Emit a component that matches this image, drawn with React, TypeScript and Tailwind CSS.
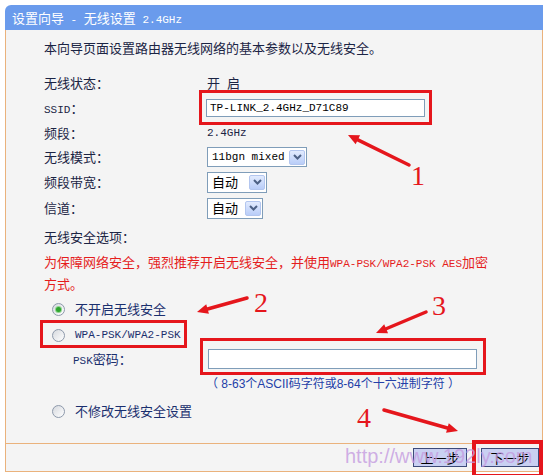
import React from 'react';

const mono = "font-['Liberation_Mono',monospace] text-[11px] whitespace-pre";
const red = '#e5161c';

function Latin({ children }: { children: React.ReactNode }) {
  return <span className={mono}>{children}</span>;
}

function Chevron() {
  return (
    <span className="flex items-center justify-center w-[16px] h-[15px] mr-[1px] rounded-[2px] border border-[#b3c6ef] bg-gradient-to-b from-[#e2ebfe] to-[#b9cdf8]">
      <svg width="9" height="6" viewBox="0 0 9 6">
        <path d="M1 1 L4.5 4.5 L8 1" fill="none" stroke="#4d6185" strokeWidth="2" />
      </svg>
    </span>
  );
}

function Radio({ checked = false }: { checked?: boolean }) {
  return (
    <span className="flex items-center justify-center w-[13px] h-[13px] rounded-full border border-[#8d99ab] bg-gradient-to-br from-[#d6d9de] to-white">
      {checked && <span className="w-[5px] h-[5px] rounded-full bg-[#2ea52e] ring-1 ring-[#8fd48f]" />}
    </span>
  );
}

function Row({ label, h, children }: { label: React.ReactNode; h: string; children?: React.ReactNode }) {
  return (
    <div className={`flex items-center ${h}`}>
      <span className="w-[163px]">{label}</span>
      {children}
    </div>
  );
}

function Arrow({ x1, y1, x2, y2 }: { x1: number; y1: number; x2: number; y2: number }) {
  const a = Math.atan2(y2 - y1, x2 - x1);
  const len = 11;
  const w = 5;
  const bx = x2 - len * Math.cos(a);
  const by = y2 - len * Math.sin(a);
  const px = -Math.sin(a) * w;
  const py = Math.cos(a) * w;
  return (
    <g>
      <line x1={x1} y1={y1} x2={bx} y2={by} stroke={red} strokeWidth="3.5" strokeLinecap="round" />
      <polygon points={`${x2},${y2} ${bx + px},${by + py} ${bx - px},${by - py}`} fill={red} />
    </g>
  );
}

export default function App() {
  return (
    <div className="relative w-[548px] h-[475px] overflow-hidden bg-white pl-[5px] pt-[5px] font-['Noto_Sans_CJK_SC',sans-serif] text-[13px] text-[#1b2444]">
      <div className="w-[538px]">
        <div className="h-[25px] pl-[7px] rounded-tl-[6px] bg-[#6a9bec] text-white leading-[25px] whitespace-pre">
          设置向导<Latin> - </Latin>无线设置<Latin> 2.4GHz</Latin>
        </div>

        <div className="h-[413px] flex flex-col pl-[38px] pt-[8px] border-x border-[#eab27c] bg-[#f4f4f4]">
          <div className="h-[20px] leading-[20px]">本向导页面设置路由器无线网络的基本参数以及无线安全。</div>

          <div className="mt-[13px] flex flex-col">
            <Row label="无线状态：" h="h-[24px]">
              <span>开</span>
              <span className="ml-[7px]">启</span>
            </Row>
            <Row label={<><Latin>SSID</Latin>：</>} h="h-[26px]">
              <div className="w-[219px] h-[18px] ml-[-1px] flex items-center pl-[3px] bg-white border border-[#7f9db9] text-black">
                <Latin>TP-LINK_2.4GHz_D71C89</Latin>
              </div>
            </Row>
            <Row label="频段：" h="h-[24px]">
              <Latin>2.4GHz</Latin>
            </Row>
            <Row label="无线模式：" h="h-[24px]">
              <div className="w-[100px] h-[20px] flex items-center justify-between pl-[4px] bg-white border border-[#7f9db9] text-black">
                <Latin>11bgn mixed</Latin>
                <Chevron />
              </div>
            </Row>
            <Row label="频段带宽：" h="h-[26px]">
              <div className="w-[60px] h-[21px] flex items-center justify-between pl-[4px] bg-white border border-[#7f9db9] text-black">
                自动
                <Chevron />
              </div>
            </Row>
            <Row label="信道：" h="h-[26px]">
              <div className="w-[56px] h-[21px] flex items-center justify-between pl-[4px] bg-white border border-[#7f9db9] text-black">
                自动
                <Chevron />
              </div>
            </Row>
            <div className="h-[31px] flex items-center">无线安全选项：</div>
          </div>

          <div className="leading-[20px] whitespace-nowrap text-[#e51d1d]">
            为保障网络安全，强烈推荐开启无线安全，并使用<Latin>WPA-PSK/WPA2-PSK AES</Latin>加密
            <br />
            方式。
          </div>

          <div className="mt-[5px] h-[20px] flex items-center pl-[8px] gap-[10px] text-[#1a2f6e]">
            <Radio checked />
            <span>不开启无线安全</span>
          </div>
          <div className="mt-[6px] h-[20px] flex items-center pl-[8px] gap-[10px] text-[#1a2f6e]">
            <Radio />
            <Latin>WPA-PSK/WPA2-PSK</Latin>
          </div>
          <div className="mt-[4px] h-[20px] flex items-center pl-[29px] text-[#1a2f6e]">
            <span className="w-[135px]">
              <Latin>PSK</Latin>密码：
            </span>
            <div className="w-[269px] h-[20px] bg-white border border-[#7f9db9]" />
          </div>
          <div className="mt-[5px] h-[20px] flex items-center pl-[162px] text-[12px] text-[#2340a8] font-['Liberation_Sans','Noto_Sans_CJK_SC',sans-serif] whitespace-pre">
            （ 8-63个ASCII码字符或8-64个十六进制字符 ）
          </div>
          <div className="mt-[7px] h-[20px] flex items-center pl-[8px] gap-[10px] text-[#1a2f6e]">
            <Radio />
            <span>不修改无线安全设置</span>
          </div>
        </div>

        <div className="h-[29px] flex items-center justify-end gap-[14px] pr-[3px] border border-[#eab27c] bg-[#f4f4f4] text-black">
          <button className="w-[54px] h-[19px] flex items-center justify-center border border-[#3c4a7a] bg-[#c9d0f2] leading-none">上一步</button>
          <button className="w-[58px] h-[19px] flex items-center justify-center border border-[#3c4a7a] bg-[#c9d0f2] leading-none">下一步</button>
        </div>
      </div>

      {/* annotations */}
      <div className="absolute inset-0 pointer-events-none">
        <div className="absolute left-[199px] top-[90px] w-[233px] h-[35px] border-[3px] border-[#e5161c]" />
        <div className="absolute left-[40px] top-[320px] w-[147px] h-[28px] border-[3px] border-[#e5161c]" />
        <div className="absolute left-[200px] top-[338px] w-[286px] h-[37px] border-[3px] border-[#e5161c]" />
        <div className="absolute left-[472px] top-[440px] w-[71px] h-[38px] border-[4px] border-[#e5161c]" />

        <svg className="absolute inset-0" width="548" height="475">
          <Arrow x1={409} y1={165} x2={348} y2={135} />
          <Arrow x1={247} y1={298} x2={197} y2={312} />
          <Arrow x1={426} y1={312} x2={376} y2={333} />
          <Arrow x1={384} y1={410} x2={458} y2={431} />
        </svg>

        <span className="absolute left-[411px] top-[162px] text-[28px] leading-[28px] text-[#e5161c] font-['Liberation_Serif',serif]">1</span>
        <span className="absolute left-[254px] top-[289px] text-[28px] leading-[28px] text-[#e5161c] font-['Liberation_Serif',serif]">2</span>
        <span className="absolute left-[432px] top-[292px] text-[28px] leading-[28px] text-[#e5161c] font-['Liberation_Serif',serif]">3</span>
        <span className="absolute left-[357px] top-[404px] text-[28px] leading-[28px] text-[#e5161c] font-['Liberation_Serif',serif]">4</span>

        <span className="absolute left-[345px] top-[446px] text-[20px] leading-[20px] text-[#c49be0]/80 font-['Liberation_Sans',sans-serif] whitespace-nowrap">
          http://www.192ly.com
        </span>
      </div>
    </div>
  );
}
